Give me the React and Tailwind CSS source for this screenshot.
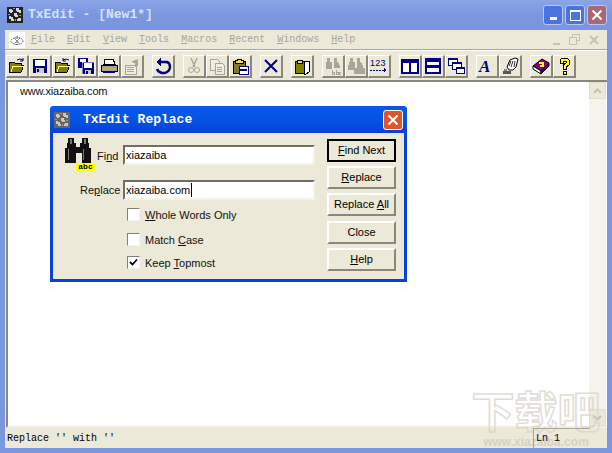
import React from "react";

const I = ({ children, s = 18 }) => (
  <svg width={s} height={s} viewBox="0 0 18 18" shapeRendering="crispEdges" className="block">{children}</svg>
);
const navy = "#000080";
const off = "#a8a699";
const icons = {
  open: <I><path d="M1 15V5h5l1 1h6v2h3l-3 7z" fill="#808000" stroke="#000" /><path d="M3 15l2-6h11" fill="none" stroke="#ffff99" /><path d="M9 3q3-2 6 0M15 1v3h-3" fill="none" stroke={navy} shapeRendering="auto" /></I>,
  save: <I><path d="M2 2h14v14H2z" fill={navy} /><path d="M4 3h10v6H4z" fill="#fff" /><path d="M5 11h8v5H5z" fill="#c8c8c8" /><path d="M6 12h2v3H6z" fill={navy} /></I>,
  open2: <I><path d="M1 15V5h5l1 1h6v2h3l-3 7z" fill="#808000" stroke="#000" /><path d="M3 15l2-6h11" fill="none" stroke="#ffff99" /><path d="M15 3q-3-2-6 0M9 1v3h3" fill="none" stroke={navy} shapeRendering="auto" /></I>,
  saveAll: <I><path d="M1 1h10v10H1z" fill={navy} /><path d="M3 2h6v3H3z" fill="#fff" /><path d="M5 5h12v12H5z" fill={navy} stroke="#fff" strokeWidth=".5" /><path d="M7 6h8v5H7z" fill="#fff" /><path d="M8 13h6v4H8z" fill="#c8c8c8" /><path d="M9 14h2v3H9z" fill={navy} /></I>,
  print: <I><path d="M5 2h8l2 5H4z" fill="#fff" stroke="#000" /><path d="M1 8h16v6H1z" fill="#a0a0b0" stroke="#000" /><path d="M2 11h14v2H2z" fill="#c8b040" /><path d="M3 14h12v2H3z" fill={navy} /></I>,
  preview: <I><path d="M2 8h11v9H2z" fill="#f0eee2" stroke={off} /><path d="M4 10h7M4 12h7M4 14h7" stroke={off} /><path d="M8 5l7-3v7l-3 1V6z" fill={off} /></I>,
  undo: <I><path d="M5 5h8q3 1 3 5t-5 6H8q-4-1-5-4" fill="none" stroke={navy} strokeWidth="2.4" shapeRendering="auto" /><path d="M7 1v8L2 5z" fill={navy} /></I>,
  cut: <I><path d="M6 1l4 9M12 1L8 10" stroke={off} strokeWidth="1.4" shapeRendering="auto" /><circle cx="6" cy="13" r="2.5" fill="none" stroke={off} shapeRendering="auto" /><circle cx="12" cy="13" r="2.5" fill="none" stroke={off} shapeRendering="auto" /></I>,
  copy: <I><path d="M2 2h7l2 2v9H2z" fill="#f0eee2" stroke={off} /><path d="M7 6h7l2 2v9H7z" fill="#f0eee2" stroke={off} /><path d="M9 10h5M9 12h5M9 14h5" stroke={off} /></I>,
  paste: <I><path d="M2 4h12v12H2z" fill="#807a30" stroke="#000" /><path d="M6 2h4v1h2v3H4V3h2z" fill="#f0d860" stroke="#000" /><path d="M8 9h9v8H8z" fill="#fff" stroke={navy} /><path d="M9 12h7v2H9z" fill={navy} /></I>,
  x: <I><path d="M3 3l12 12M15 3L3 15" stroke={navy} strokeWidth="2" shapeRendering="auto" /></I>,
  clip: <I><path d="M2 4h9v12H2z" fill="#808000" stroke="#000" /><path d="M4 3h5v3H4z" fill="#d8d8b0" stroke="#000" /><path d="M11 4h5v11l-3 2h-2z" fill="#fff" stroke="#000" /></I>,
  find: <I><path d="M3 1h3v4h2v4H2zM10 1h3v4h1l2 4h-6z" fill={off} /><path d="M2 8h6v4H2zM10 8h6v3h-6z" fill={off} /><path d="M7 12h10v6H7z" fill="#ece9d8" /><path d="M8 13v4h2v-2H8M12 13v4h2v-2h-2M17 15h-2v2h2" fill="none" stroke={off} /></I>,
  find2: <I><path d="M3 1h3v4h2v4H2zM10 1h3v4h1l2 4h-6z" fill={off} /><path d="M1 8h7v5H1zM10 8h6v5h-6z" fill={off} /><path d="M7 11h11v6H7z" fill={off} /></I>,
  goto: <I><text x="0" y="9" fontSize="9" fontFamily="Liberation Sans" fill={navy} letterSpacing=".3">123</text><path d="M0 13h2M3 13h2M6 13h2M9 13h2M12 13h3" stroke={navy} /><path d="M14 10.500v5l3-2.500z" fill={navy} /></I>,
  cols: <I><path d="M1 3h16v13H1z" fill="#fff" stroke={navy} strokeWidth="1.600" /><path d="M1 3h16v3H1z" fill={navy} /><path d="M9 3v13" stroke={navy} strokeWidth="1.400" /></I>,
  rows: <I><path d="M2 2h14v14H2z" fill="#fff" stroke={navy} strokeWidth="1.600" /><path d="M2 2h14v3H2zM2 8h14v3H2z" fill={navy} /></I>,
  casc: <I><path d="M1 1h9v7H1z" fill="#fff" stroke={navy} /><path d="M1 1h9v2H1z" fill={navy} /><path d="M5 5h9v7H5z" fill="#fff" stroke={navy} /><path d="M5 5h9v2H5z" fill={navy} /><path d="M9 10h8v6H9z" fill="#fff" stroke={navy} /><path d="M9 10h8v2H9z" fill={navy} /></I>,
  font: <I><text x="1" y="15" fontSize="17" fontStyle="italic" fontWeight="700" fontFamily="Liberation Serif" fill={navy}>A</text></I>,
  hand: <I><path d="M6 10l3-7 5-2 3 1-2 8-3 3H8z" fill="#fff" stroke="#000" shapeRendering="auto" /><path d="M10 4l-2 5M12 4l-2 6M14 4l-1 6" stroke="#000" strokeWidth=".8" shapeRendering="auto" /><path d="M2 14h8v3H2z" fill="#555" /><path d="M3 12h3v2H3z" fill="#888" /></I>,
  book: <I><path d="M1 9l9-7 7 4-8 8z" fill="#800080" stroke="#000" shapeRendering="auto" /><path d="M1 9l8 5v3l-8-5z" fill="#fff" stroke="#000" shapeRendering="auto" /><path d="M9 14l8-8v3l-8 8z" fill="#500050" stroke="#000" shapeRendering="auto" /><path d="M7 6h4v3H8" fill="none" stroke="#ffff00" strokeWidth="1.300" /></I>,
  help: <I><path d="M5 6V3l2-2h5l2 2v5l-3 2v2H8V8l3-2V4H8v2z" fill="#ffff00" stroke="#000" /><path d="M8 14h3v3H8z" fill="#ffff00" stroke="#000" /></I>,
};

const TB = ({ name }) => (
  <div className="flex h-[23px] w-[23px] items-center justify-center border-t border-l border-t-white border-l-white border-r-2 border-b-2 border-r-[#8a887c] border-b-[#8a887c] bg-[#ece9d8]">
    {icons[name]}
  </div>
);

const Group = ({ items }) => (
  <div className="flex">{items.map((n) => <TB key={n} name={n} />)}</div>
);

const Logo = ({ bg = "#444", fg = "#d8d8d8" }) => (
  <svg width="16" height="16" viewBox="0 0 16 16" shapeRendering="crispEdges" className="block">
    <rect width="16" height="16" fill={bg} />
    <path d="M2 2h3v1h1v2H5v1H3V5H2zM9 1h3v2h2v3h-2V5h-2V4H9zM7 6h3v2h1v2H8V9H7zM2 9h2v1h2v2h1v2H4v-2H2zM11 11h3v3h-4v-2h1z" fill={fg} />
    <path d="M6 1h2v1H6zM1 7h2v1H1zM12 8h2v1h-2zM8 12h1v2H8z" fill="#999" />
  </svg>
);

const DialogBtn = ({ children, def }) => (
  <div className={`flex h-[23px] w-[69px] items-center justify-center bg-[#ece9d8] text-[11px] text-black ${def ? "border-2 border-black" : "border-t-2 border-l-2 border-t-white border-l-white border-r-2 border-b-2 border-r-[#8a887c] border-b-[#8a887c]"}`}>
    <span>{children}</span>
  </div>
);

const Check = ({ children, checked }) => (
  <div className="flex h-[13px] items-center gap-[5px] text-[11px] leading-[13px] text-[#111]">
    <div className="flex h-[13px] w-[13px] items-center justify-center border-t border-l border-t-[#808080] border-l-[#808080] border-r border-b border-r-[#f5f4ec] border-b-[#f5f4ec] bg-white">
      {checked && (
        <svg width="9" height="9" viewBox="0 0 9 9" className="block"><path d="M1 4l2.500 2.500L8 1.500" fill="none" stroke="#000" strokeWidth="1.800" /></svg>
      )}
    </div>
    <span className="pt-[1px]">{children}</span>
  </div>
);

const Input = ({ value, caret }) => (
  <div className="flex h-[20px] w-[192px] items-center border-t-2 border-l-2 border-t-[#716f64] border-l-[#716f64] border-r-2 border-b-2 border-r-[#f4f3ea] border-b-[#f4f3ea] bg-white pl-[1px] text-[11px] text-black">
    {value}
    {caret && <span className="ml-[1px] h-[14px] w-[1px] bg-black" />}
  </div>
);

export default function App() {
  return (
    <div className="relative flex h-[453px] w-[612px] flex-col overflow-hidden bg-[#7a96df] font-['Liberation_Sans',sans-serif]">
      {/* main title */}
      <div className="flex h-[30px] shrink-0 items-center bg-gradient-to-b from-[#8ba5e8] via-[#7a96df] to-[#7a96df] pl-[7px] pr-[5px]">
        <div className="h-[16px] w-[16px]"><Logo bg="#222" /></div>
        <span className="ml-[5px] font-['Liberation_Mono',monospace] text-[13px] font-bold text-[#d6e2fa]">TxEdit - [New1*]</span>
        <div className="ml-auto flex gap-[2px]">
          <div className="flex h-[20px] w-[20px] items-end justify-center rounded-[3px] border border-[#b8c8f0] bg-[#4a72e0] pb-[4px]"><div className="h-[3px] w-[7px] bg-white" /></div>
          <div className="flex h-[20px] w-[20px] items-center justify-center rounded-[3px] border border-[#b8c8f0] bg-[#4a72e0]"><div className="h-[11px] w-[11px] border border-t-2 border-[#fff]" /></div>
          <div className="flex h-[20px] w-[20px] items-center justify-center rounded-[3px] border border-[#b8c8f0] bg-[#a86878]">
            <svg width="12" height="12" viewBox="0 0 12 12"><path d="M1.500 1.500l9 9M10.500 1.500l-9 9" stroke="#fff" strokeWidth="2" /></svg>
          </div>
        </div>
      </div>

      {/* client */}
      <div className="mx-[5px] flex min-h-0 flex-1 flex-col bg-[#ece9d8]">
        {/* menu */}
        <div className="flex h-[20px] shrink-0 items-center border-b border-b-[#aca899] font-['Liberation_Mono',monospace] text-[10px] text-[#a8a699]">
          <div className="ml-[4px] h-[16px] w-[16px] bg-white p-[1px]">
            <svg width="14" height="14" viewBox="0 0 14 14" className="block"><ellipse cx="7" cy="8" rx="6" ry="3.500" fill="none" stroke="#333" strokeDasharray="1 1" /><path d="M7 3v9M4 5l6 6M10 5l-6 6" stroke="#444" strokeDasharray="1 1" /></svg>
          </div>
          <div className="ml-[6px] flex gap-[12px]">
            <span><u>F</u>ile</span>
            <span><u>E</u>dit</span>
            <span><u>V</u>iew</span>
            <span><u>T</u>ools</span>
            <span><u>M</u>acros</span>
            <span><u>R</u>ecent</span>
            <span><u>W</u>indows</span>
            <span><u>H</u>elp</span>
          </div>
          <div className="ml-auto mr-[5px] flex items-center gap-[3px]">
            <div className="flex h-[14px] w-[16px] items-end justify-center pb-[2px]"><div className="h-[2px] w-[7px] bg-[#c4c2b4]" /></div>
            <div className="relative h-[14px] w-[16px]"><div className="absolute left-[5px] top-[1px] h-[7px] w-[8px] border border-[#c4c2b4]" /><div className="absolute left-[2px] top-[4px] h-[8px] w-[8px] border border-[#c4c2b4] bg-[#ece9d8]" /></div>
            <svg width="16" height="14" viewBox="0 0 16 14"><path d="M4 3l8 8M12 3l-8 8" stroke="#c4c2b4" strokeWidth="2" /></svg>
          </div>
        </div>
        {/* toolbar */}
        <div className="flex h-[29px] shrink-0 items-center border-t border-t-white pl-[1px] pt-[2px]">
          <Group items={["open", "save", "open2", "saveAll", "print", "preview"]} />
          <div className="ml-[8px]"><Group items={["undo"]} /></div>
          <div className="ml-[8px]"><Group items={["cut", "copy", "paste"]} /></div>
          <div className="ml-[8px]"><Group items={["x"]} /></div>
          <div className="ml-[8px]"><Group items={["clip"]} /></div>
          <div className="ml-[8px]"><Group items={["find", "find2", "goto"]} /></div>
          <div className="ml-[8px]"><Group items={["cols", "rows", "casc"]} /></div>
          <div className="ml-[8px]"><Group items={["font", "hand"]} /></div>
          <div className="ml-[8px]"><Group items={["book", "help"]} /></div>
        </div>
        {/* editor */}
        <div className="ml-[1px] mt-[1px] flex min-h-0 flex-1 border-b-2 border-l-2 border-t-2 border-b-[#f1efe2] border-l-[#8a887c] border-t-[#8a887c] bg-white">
          <div className="flex-1 pl-[12px] pt-[1px] text-[11px] leading-[16px] tracking-[-0.2px] text-[#111]">www.xiazaiba.com</div>
          <div className="flex w-[17px] flex-col bg-[#f5f4ec]">
            <div className="flex h-[17px] w-[17px] items-center justify-center border border-[#dfddd0] bg-[#ece9d8]">
              <svg width="9" height="6" viewBox="0 0 9 6"><path d="M1 5l3.500-3.500L8 5" fill="none" stroke="#c4c2b4" strokeWidth="2" /></svg>
            </div>
            <div className="flex-1" />
            <div className="flex h-[17px] w-[17px] items-center justify-center border border-[#dfddd0] bg-[#ece9d8]">
              <svg width="9" height="6" viewBox="0 0 9 6"><path d="M1 1l3.500 3.500L8 1" fill="none" stroke="#c4c2b4" strokeWidth="2" /></svg>
            </div>
          </div>
          <div className="w-[1px] bg-white" />
        </div>
        {/* status */}
        <div className="flex h-[20px] shrink-0 items-center font-['Liberation_Mono',monospace] text-[10px] text-black">
          <span className="pl-[2px]">Replace '' with ''</span>
          <div className="relative z-10 ml-auto mr-[17px] flex h-[20px] w-[57px] items-center border-l border-t border-l-[#aca899] border-t-[#aca899] pl-[2px]">Ln 1</div>
        </div>
      </div>
      <div className="h-[5px] shrink-0" />

      {/* dialog */}
      <div className="absolute left-[50px] top-[106px] z-20 flex h-[176px] w-[357px] flex-col rounded-t-[4px] bg-[#0a3fd8]">
        <div className="flex h-[27px] shrink-0 items-center rounded-t-[4px] bg-gradient-to-b from-[#0a5ae8] via-[#0454e4] to-[#0a3fd8] pl-[4px] pr-[4px]">
          <div className="h-[16px] w-[16px]"><Logo bg="#666" fg="#c8c8c8" /></div>
          <span className="ml-[13px] font-['Liberation_Mono',monospace] text-[13px] font-bold text-white">TxEdit Replace</span>
          <div className="ml-auto flex h-[20px] w-[20px] items-center justify-center rounded-[3px] border border-white bg-[#e0542c]">
            <svg width="12" height="12" viewBox="0 0 12 12"><path d="M1.500 1.500l9 9M10.500 1.500l-9 9" stroke="#fff" strokeWidth="2" /></svg>
          </div>
        </div>
        <div className="mx-[3px] mb-[3px] flex flex-1 bg-[#ece9d8] pl-[10px] pr-[8px]">
          <div className="flex-1">
            <div className="mt-[5px] flex h-[34px] items-center">
              <div className="relative h-[34px] w-[32px]">
                <svg width="30" height="25" viewBox="0 0 30 25" shapeRendering="crispEdges" className="block">
                  <path d="M5 0h6v5h2v4h4V5h2V0h6v5h1v5h2v15h-9V15h-6v10H2V10h2V5h1z" fill="#111" />
                  <path d="M7 1h2v5H7zM21 1h2v5h-2zM5 11h1v11H5zM20 11h1v11h-1z" fill="#777" />
                </svg>
                <div className="absolute left-[13px] top-[25px] flex h-[8px] w-[19px] items-center justify-center bg-[#ffff00] font-['Liberation_Mono',monospace] text-[8px] font-bold text-black">abc</div>
              </div>
              <span className="ml-[2px] w-[26px] pt-[3px] text-[11px] text-[#111]">Fi<u>n</u>d</span>
              <Input value="xiazaiba" />
            </div>
            <div className="mt-[8px] flex h-[20px] items-center">
              <span className="w-[60px] pl-[17px] text-[11px] text-[#111]">Re<u>p</u>lace</span>
              <Input value="xiazaiba.com" caret />
            </div>
            <div className="ml-[64px] mt-[8px] flex flex-col">
              <Check><u>W</u>hole Words Only</Check>
              <div className="mt-[12px]"><Check>Match <u>C</u>ase</Check></div>
              <div className="mt-[10px]"><Check checked>Keep <u>T</u>opmost</Check></div>
            </div>
          </div>
          <div className="mt-[6px] flex flex-col gap-[4px]">
            <DialogBtn def><u>F</u>ind Next</DialogBtn>
            <DialogBtn><u>R</u>eplace</DialogBtn>
            <DialogBtn>Replace <u>A</u>ll</DialogBtn>
            <div className="mt-[1px]"><DialogBtn>Close</DialogBtn></div>
            <DialogBtn><u>H</u>elp</DialogBtn>
          </div>
        </div>
      </div>

      {/* watermark */}
      <div className="pointer-events-none absolute left-[468px] top-[382px] flex w-[136px] flex-col items-center opacity-80">
        <span className="font-['Noto_Sans_CJK_SC',sans-serif] text-[43px] font-bold leading-[54px] text-transparent [-webkit-text-stroke:1.500px_#d8d6cc]">下载吧</span>
        <span className="text-[12px] font-bold leading-[12px] text-[#cfcdc0]">www.xiazaiba.com</span>
      </div>
    </div>
  );
}
